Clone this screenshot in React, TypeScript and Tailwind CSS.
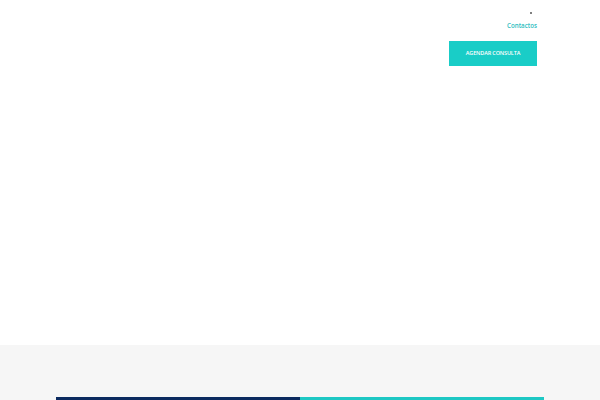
import React from 'react';

export default function App() {
  return (
    <div className="w-[600px] h-[400px] overflow-hidden bg-white flex flex-col" style={{ fontFamily: '"Open Sans", sans-serif' }}>
      <header className="h-[345px] flex justify-end pr-[63px]">
        <div className="flex flex-col items-end">
          <span className="mt-[12px] mr-[5px] w-[2px] h-[2px] rounded-full bg-[#555]" />
          <a className="mt-[7px] text-[6.2px] leading-[10px] font-semibold text-[#2bbdc0]">Contactos</a>
          <button className="mt-[10px] w-[88px] h-[25px] bg-[#19cdc7] text-white text-[5.5px] font-semibold tracking-tight">
            AGENDAR CONSULTA
          </button>
        </div>
      </header>
      <section className="flex-1 bg-[#f6f6f6] flex flex-col justify-end px-[56px]">
        <div className="flex h-[3px]">
          <div className="flex-1 bg-[#0b2a5f]" />
          <div className="flex-1 bg-[#1ec8c4]" />
        </div>
      </section>
    </div>
  );
}
